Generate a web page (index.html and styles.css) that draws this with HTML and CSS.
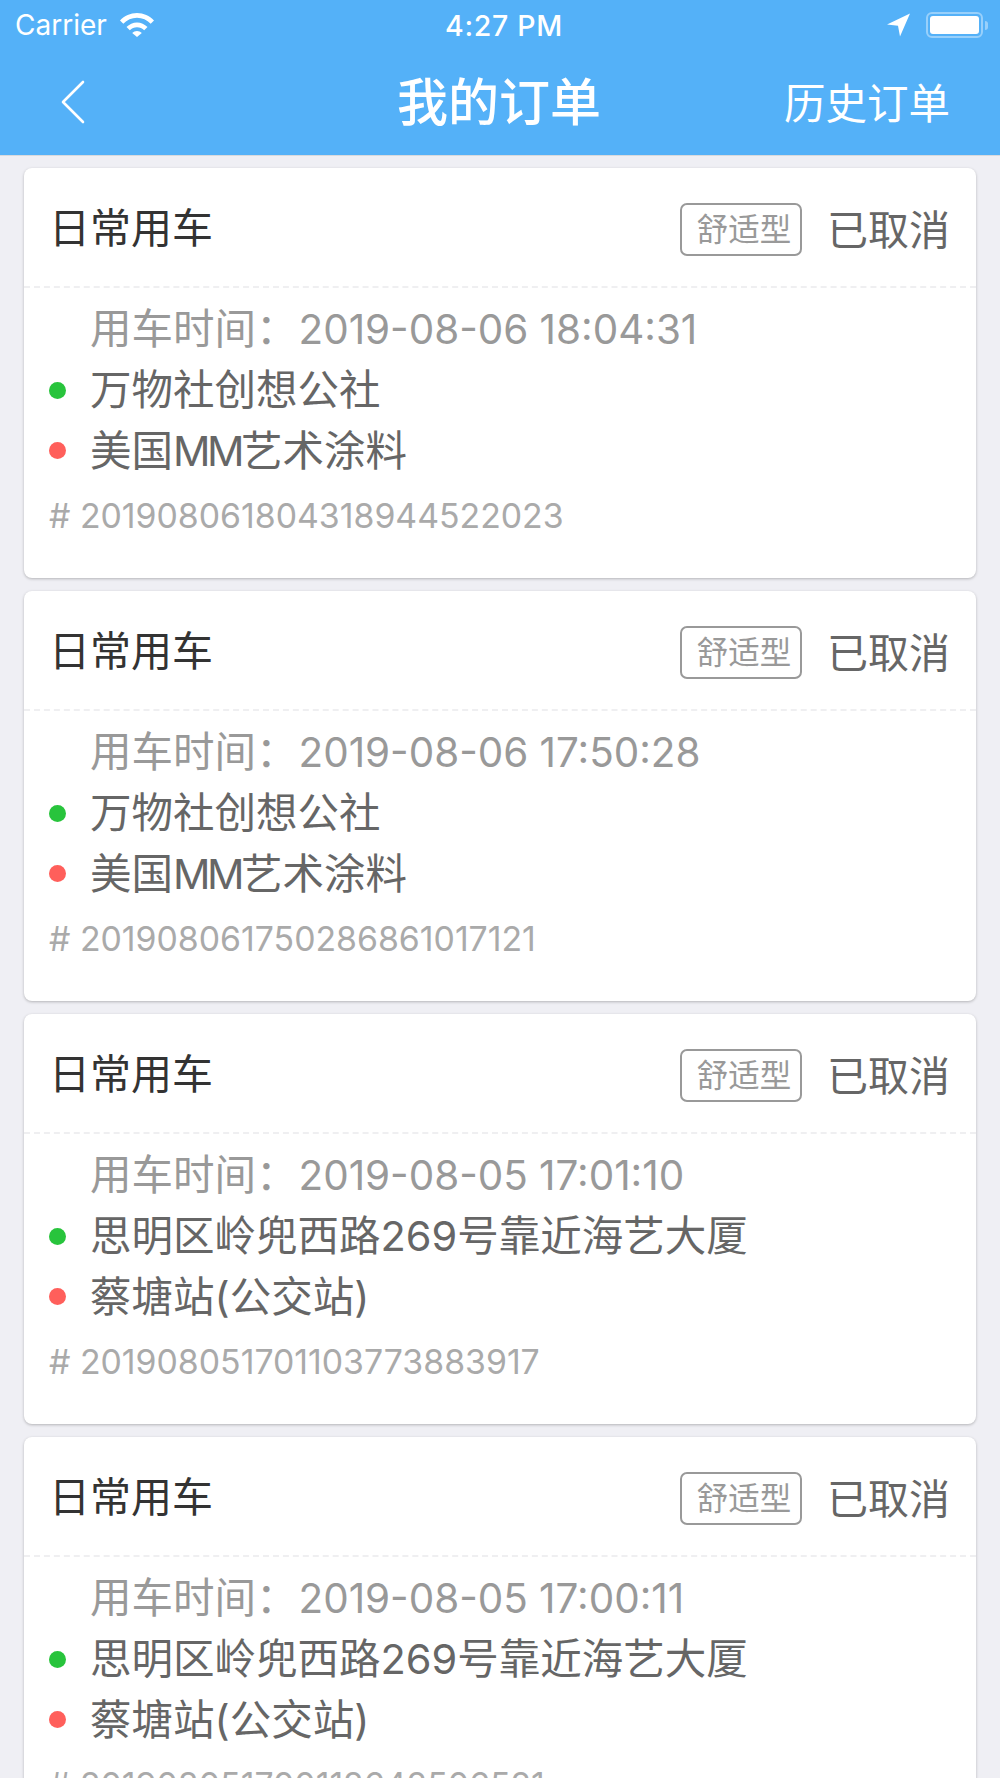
FILE: index.html
```html
<!DOCTYPE html>
<html lang="zh-CN">
<head>
    <meta charset="UTF-8">
    <meta name="viewport" content="width=device-width, initial-scale=1.0">
    <title>我的订单</title>
    <link rel="stylesheet" href="styles.css">
</head>
<body>
    <header class="top-bar">
        <div class="status-bar">
            <div class="status-left">
                <span>Carrier</span>
                <svg class="wifi-icon" width="36" height="26" viewBox="0 0 36 26">
                    <path fill="#fff" d="M1 9.500C5.500 4.800 11.400 2 18 2s12.500 2.800 17 7.500l-3.300 3.300C28 9 23.300 6.800 18 6.800S8 9 4.300 12.800z"/>
                    <path fill="#fff" d="M7.500 16C10.300 13.200 14 11.400 18 11.400s7.700 1.800 10.500 4.600l-3.300 3.300c-1.900-1.900-4.400-3.100-7.200-3.100s-5.300 1.200-7.200 3.100z"/>
                    <path fill="#fff" d="M13.200 22c1.300-1.300 3-2 4.800-2s3.500.7 4.800 2L18 26z"/>
                </svg>
            </div>
            <div class="status-time">4:27 PM</div>
            <div class="status-right">
                <svg width="25" height="24" viewBox="0 0 24 24">
                    <path fill="#fff" d="M23.500.5 .5 11.500l11 1.200 2 10.800z"/>
                </svg>
                <div class="battery">
                    <div class="battery-level"></div>
                </div>
                <div class="battery-tip"></div>
            </div>
        </div>
        <nav class="nav-bar">
            <svg class="back-icon" width="26" height="44" viewBox="0 0 26 44">
                <path fill="none" stroke="#fff" stroke-width="2.600" stroke-linecap="round" stroke-linejoin="round" d="M23 2 3 22l20 20"/>
            </svg>
            <h1 class="nav-title">我的订单</h1>
            <a class="nav-link">历史订单</a>
        </nav>
    </header>

    <main class="order-list">
        <section class="order-card">
            <div class="card-head">
                <span class="order-type">日常用车</span>
                <span class="car-tag">舒适型</span>
                <span class="order-state">已取消</span>
            </div>
            <div class="card-body">
                <p class="order-time">用车时间：<span class="time-value">2019-08-06 18:04:31</span></p>
                <p class="place"><i class="dot dot-green"></i>万物社创想公社</p>
                <p class="place"><i class="dot dot-red"></i><span>美国<span class="latin">MM</span>艺术涂料</span></p>
                <p class="order-no"># 201908061804318944522023</p>
            </div>
        </section>
        <section class="order-card">
            <div class="card-head">
                <span class="order-type">日常用车</span>
                <span class="car-tag">舒适型</span>
                <span class="order-state">已取消</span>
            </div>
            <div class="card-body">
                <p class="order-time">用车时间：<span class="time-value">2019-08-06 17:50:28</span></p>
                <p class="place"><i class="dot dot-green"></i>万物社创想公社</p>
                <p class="place"><i class="dot dot-red"></i><span>美国<span class="latin">MM</span>艺术涂料</span></p>
                <p class="order-no"># 201908061750286861017121</p>
            </div>
        </section>
        <section class="order-card">
            <div class="card-head">
                <span class="order-type">日常用车</span>
                <span class="car-tag">舒适型</span>
                <span class="order-state">已取消</span>
            </div>
            <div class="card-body">
                <p class="order-time">用车时间：<span class="time-value">2019-08-05 17:01:10</span></p>
                <p class="place"><i class="dot dot-green"></i>思明区岭兜西路269号靠近海艺大厦</p>
                <p class="place"><i class="dot dot-red"></i>蔡塘站(公交站)</p>
                <p class="order-no"># 201908051701103773883917</p>
            </div>
        </section>
        <section class="order-card">
            <div class="card-head">
                <span class="order-type">日常用车</span>
                <span class="car-tag">舒适型</span>
                <span class="order-state">已取消</span>
            </div>
            <div class="card-body">
                <p class="order-time">用车时间：<span class="time-value">2019-08-05 17:00:11</span></p>
                <p class="place"><i class="dot dot-green"></i>思明区岭兜西路269号靠近海艺大厦</p>
                <p class="place"><i class="dot dot-red"></i>蔡塘站(公交站)</p>
                <p class="order-no"># 201908051700112642506521</p>
            </div>
        </section>
    </main>
</body>
</html>
```

FILE: styles.css
```css
html, body {
    height: 100%;
    overflow: hidden;
}
body {
    margin: 0;
    background-color: #efeff4;
    font-family: "Inter", "Noto Sans CJK SC", sans-serif;
}
p, h1 {
    margin: 0;
    font-weight: normal;
}
.top-bar {
    height: 156px;
    background-color: #54b1f8;
    color: #fff;
    border-bottom: 1px solid #d8dade;
    box-sizing: border-box;
}
.status-bar {
    height: 50px;
    display: flex;
    align-items: center;
    justify-content: space-between;
    padding: 0 12px 0 15px;
    font-size: 28px;
    position: relative;
}
.status-left {
    display: flex;
    align-items: center;
    gap: 12px;
}
.wifi-icon {
    margin-top: -2px;
}
.status-time {
    position: absolute;
    left: 8px;
    right: 0;
    text-align: center;
    font-size: 28.500px;
    font-weight: 500;
    letter-spacing: 0.7px;
}
.status-right {
    display: flex;
    align-items: center;
}
.battery {
    margin-left: 15px;
    width: 57px;
    height: 26px;
    box-sizing: border-box;
    border: 2px solid rgba(255, 255, 255, 0.4);
    border-radius: 6px;
    padding: 2px;
}
.battery-level {
    height: 100%;
    background-color: #fff;
    border-radius: 3px;
}
.battery-tip {
    width: 3px;
    height: 9px;
    margin-left: 2px;
    background-color: rgba(255, 255, 255, 0.4);
    border-radius: 0 3px 3px 0;
}
.nav-bar {
    height: 104px;
    display: flex;
    align-items: center;
    justify-content: space-between;
    padding: 0 50px 0 60px;
    position: relative;
}
.nav-title {
    position: absolute;
    left: 0;
    right: 2px;
    text-align: center;
    font-size: 51px;
    font-weight: 500;
    margin-top: -6px;
}
.nav-link {
    font-size: 41.500px;
    margin-top: -2px;
}
.order-list {
    padding: 12px 24px 0;
}
.order-card {
    height: 410px;
    margin-bottom: 13px;
    background-color: #fff;
    border-radius: 8px;
    box-shadow: 0 1px 3px rgba(0, 0, 0, 0.25);
}
.card-head {
    height: 120px;
    box-sizing: border-box;
    display: flex;
    align-items: center;
    padding: 0 26px 0 25px;
    border-bottom: 2px dashed #efeff1;
}
.order-type {
    font-size: 41px;
    color: #333;
    margin-right: auto;
    margin-bottom: 5px;
}
.car-tag {
    width: 122px;
    height: 53px;
    box-sizing: border-box;
    border: 2px solid #999;
    border-radius: 7px;
    margin-top: 4px;
    padding-left: 6px;
    font-size: 31.500px;
    line-height: 49px;
    text-align: center;
    color: #999;
}
.order-state {
    margin-left: 25px;
    font-size: 41px;
    color: #666;
}
.card-body {
    padding: 10px 25px 0;
}
.order-time {
    height: 62px;
    line-height: 62px;
    padding-left: 41px;
    font-size: 41.500px;
    color: #999;
}
.time-value {
    margin-left: 1px;
    font-size: 40.400px;
}
.place {
    height: 60.500px;
    line-height: 60.500px;
    display: flex;
    align-items: center;
    font-size: 41.500px;
    color: #666;
}
.latin {
    letter-spacing: -3.500px;
}
.dot {
    width: 17px;
    height: 17px;
    margin-right: 24px;
    border-radius: 50%;
}
.dot-green {
    background-color: #28c43c;
}
.dot-red {
    background-color: #ff5f5b;
}
.order-no {
    margin-top: 10px;
    height: 50px;
    line-height: 50px;
    font-size: 33.800px;
    color: #aaa;
}
```
